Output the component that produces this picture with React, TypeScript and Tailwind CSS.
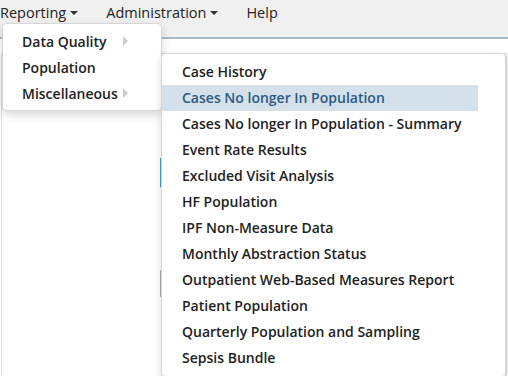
import React from "react";

const items = [
  "Case History",
  "Cases No longer In Population",
  "Cases No longer In Population - Summary",
  "Event Rate Results",
  "Excluded Visit Analysis",
  "HF Population",
  "IPF Non-Measure Data",
  "Monthly Abstraction Status",
  "Outpatient Web-Based Measures Report",
  "Patient Population",
  "Quarterly Population and Sampling",
  "Sepsis Bundle",
];

function DownCaret() {
  return (
    <span className="ml-[4px] inline-block h-0 w-0 border-x-[4px] border-t-[4px] border-x-transparent border-t-[#333]" />
  );
}

function SubItem({ label, sub }: { label: string; sub?: boolean }) {
  return (
    <div className="flex h-[26px] items-center pl-[19px] font-semibold text-[#222]">
      <span className="w-[101px]">{label}</span>
      {sub && (
        <span className="h-0 w-0 border-y-[5px] border-l-[5px] border-y-transparent border-l-[#cccccc]" />
      )}
    </div>
  );
}

export default function App() {
  return (
    <div className="relative h-[376px] w-[508px] overflow-hidden bg-white font-['Open_Sans',sans-serif] text-[14px] text-[#222]">
      {/* top nav */}
      <div className="flex h-[39px] items-start gap-[28px] border-b-2 border-[#a3bccb] bg-[#f0f0f0] text-[14.5px]">
        <div className="flex h-[26px] items-center">
          Reporting
          <DownCaret />
        </div>
        <div className="flex h-[26px] items-center">
          Administration
          <DownCaret />
        </div>
        <div className="flex h-[26px] items-center">Help</div>
      </div>

      {/* background page content */}
      <div className="mx-[1px] mt-[14px] flex h-[330px] flex-col items-end border-x border-t border-[#dcdcdc] pr-[344px]">
        <div className="mt-[104px] h-[29px] w-[2px] bg-[#3d9fcf]" />
        <div className="mt-[83px] h-[27px] w-[2px] bg-[#b0b0b0]" />
      </div>

      {/* first dropdown */}
      <div className="absolute left-[2px] top-[23px] w-[160px] rounded-[4px] border border-[#d6d6d6] bg-white py-[4px] shadow-[0_4px_10px_rgba(0,0,0,0.15)]">
        <SubItem label="Data Quality" sub />
        <SubItem label="Population" />
        <SubItem label="Miscellaneous" sub />
      </div>

      {/* second dropdown */}
      <div className="absolute left-[161px] top-[53px] w-[345px] rounded-[4px] border border-[#d6d6d6] bg-white py-[5px] shadow-[0_4px_10px_rgba(0,0,0,0.15)]">
        {items.map((t, i) => (
          <div
            key={t}
            className={
              i === 1
                ? "h-[26px] w-[316px] bg-[#d4e1eb] pl-[20px] font-semibold leading-[26px] text-[#2b5a85]"
                : "h-[26px] pl-[20px] font-semibold leading-[26px] text-[#222]"
            }
          >
            {t}
          </div>
        ))}
      </div>
    </div>
  );
}
